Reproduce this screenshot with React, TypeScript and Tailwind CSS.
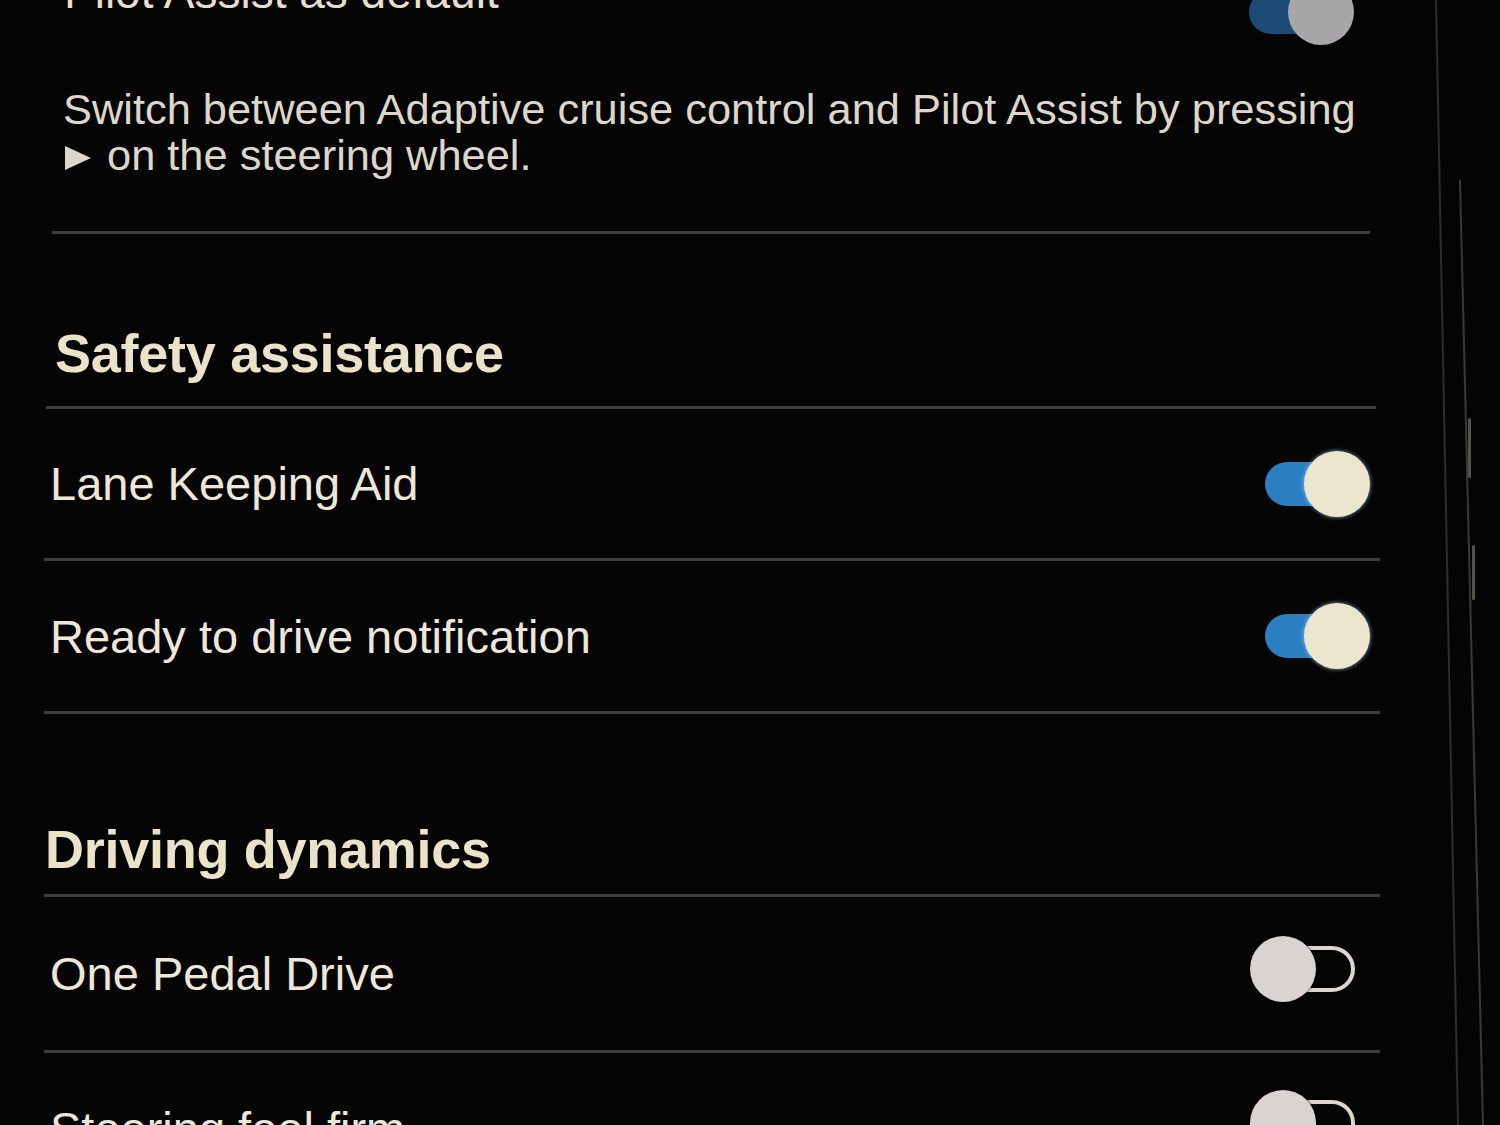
import React from "react";

function Toggle({ on, dim = false }: { on: boolean; dim?: boolean }) {
  if (on) {
    return (
      <div className="flex items-center w-[105px] h-[66px]">
        <div
          className={
            "w-[93px] h-[44px] rounded-full " +
            (dim ? "bg-[#1b4b76]" : "bg-[#2a7fc3]")
          }
        />
        <div
          className={
            "relative -ml-[54px] w-[66px] h-[66px] rounded-full " +
            (dim
              ? "bg-[#a9a6a9]"
              : "bg-[#ece6cf] shadow-[0_0_4px_rgba(190,215,255,0.75)]")
          }
        />
      </div>
    );
  }
  return (
    <div className="flex items-center w-[105px] h-[66px]">
      <div className="relative z-10 w-[66px] h-[66px] rounded-full bg-[#d9d3d1] shadow-[0_0_3px_rgba(0,0,0,0.9)]" />
      <div className="-ml-[54px] w-[93px] h-[46px] rounded-full border-[4px] border-[#dcd6cf]" />
    </div>
  );
}

function Divider({ className = "" }: { className?: string }) {
  return <div className={"h-[3px] shrink-0 bg-[#3d3d3d] " + className} />;
}

function Row({
  label,
  on,
  h,
}: {
  label: string;
  on: boolean;
  h: string;
}) {
  return (
    <div
      className={
        "flex shrink-0 items-center justify-between pl-[6px] " +
        (on ? "pr-[10px] " : "pr-[25px] ") +
        h
      }
    >
      <span className="text-[47px] leading-none text-[#ede7da]">{label}</span>
      <div className={on ? "" : "-mt-[10px]"}>
        <Toggle on={on} />
      </div>
    </div>
  );
}

export default function App() {
  return (
    <div
      className="relative flex h-[1125px] w-[1500px] overflow-hidden bg-[#050505]"
      style={{ fontFamily: '"Liberation Sans", Arial, sans-serif' }}
    >
      <div className="ml-[44px] flex w-[1336px] flex-col">
        {/* Top partial row */}
        <div className="-mt-[35px] flex h-[80px] shrink-0 justify-between pl-[20px] pr-[26px]">
          <span className="mt-[4px] self-start text-[46px] leading-none text-[#e6dfcf]">
            Pilot Assist as default
          </span>
          <div className="self-end">
            <Toggle on dim />
          </div>
        </div>

        {/* Description */}
        <p className="mt-[41px] shrink-0 whitespace-nowrap pl-[19px] text-[43.4px] leading-[46px] text-[#ddd7cb]">
          Switch between Adaptive cruise control and Pilot Assist by pressing
          <br />
          <svg
            className="mr-[14px] inline-block align-[-2px]"
            width="30"
            height="28"
            viewBox="0 0 30 28"
          >
            <polygon points="2,2 28,14 2,26" fill="#ddd7cb" />
          </svg>
          on the steering wheel.
        </p>

        <Divider className="mt-[53px] ml-[8px] mr-[10px]" />

        {/* Safety assistance */}
        <h2 className="mt-[92px] shrink-0 pl-[11px] text-[54px] font-bold leading-none tracking-[-0.005em] text-[#ebe3c9]">
          Safety assistance
        </h2>
        <Divider className="mt-[26px] ml-[2px] mr-[4px]" />
        <Row label="Lane Keeping Aid" on h="h-[149px]" />
        <Divider />
        <Row label="Ready to drive notification" on h="h-[150px]" />
        <Divider />

        {/* Driving dynamics */}
        <h2 className="mt-[108px] shrink-0 pl-[1px] text-[54px] font-bold leading-none tracking-[-0.005em] text-[#ebe3c9]">
          Driving dynamics
        </h2>
        <Divider className="mt-[18px]" />
        <Row label="One Pedal Drive" on={false} h="h-[153px]" />
        <Divider />
        <Row label="Steering feel firm" on={false} h="h-[150px]" />
      </div>

      {/* Screen bezel edge */}
      <div className="flex-1">
        <svg width="120" height="1125" viewBox="0 0 120 1125" className="block">
          <line x1="56" y1="0" x2="78" y2="1125" stroke="#2f2e2a" strokeWidth="2" />
          <line x1="80" y1="180" x2="103" y2="1125" stroke="#3a3934" strokeWidth="2" />
          <rect x="88" y="418" width="3" height="60" rx="1.5" fill="#55544c" />
          <rect x="92" y="545" width="3" height="55" rx="1.5" fill="#55544c" />
        </svg>
      </div>
    </div>
  );
}
